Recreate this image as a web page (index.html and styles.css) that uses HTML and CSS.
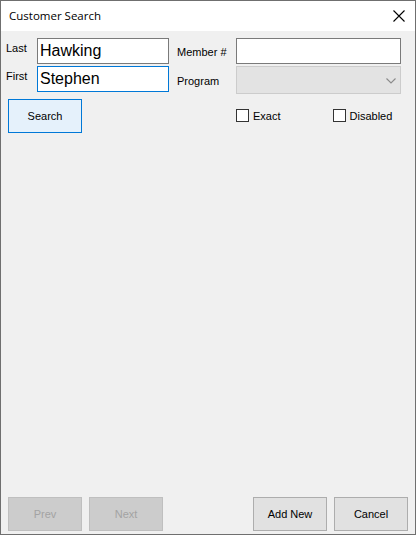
FILE: index.html
```html
<!DOCTYPE html>
<html>
<head>
<meta charset="utf-8">
<link rel="stylesheet" href="styles.css">
</head>
<body>
<div class="window">
  <div class="titlebar">
    <span class="title">Customer Search</span>
    <svg class="close" width="12" height="12" viewBox="0 0 12 12"><path d="M0.5 0.5 L11.5 11.5 M11.5 0.5 L0.5 11.5" stroke="#000" stroke-width="1.1" fill="none"/></svg>
  </div>
  <div class="content">
    <div class="form">
      <span class="lbl lbl-last">Last</span>
      <div class="tb tb-last">Hawking</div>
      <span class="lbl2 lbl-member">Member #</span>
      <div class="tb tb-member"></div>

      <span class="lbl lbl-first">First</span>
      <div class="tb tb-first focus">Stephen</div>
      <span class="lbl2 lbl-program">Program</span>
      <div class="combo">
        <svg class="chev" width="10" height="6" viewBox="0 0 10 6"><path d="M0.5 0.5 L5 5 L9.5 0.5" stroke="#8a8a8a" stroke-width="1.1" fill="none"/></svg>
      </div>

      <button class="btn btn-search">Search</button>
      <div class="checks">
        <label class="chk"><span class="box"></span><span>Exact</span></label>
        <label class="chk chk-disabled"><span class="box"></span><span>Disabled</span></label>
      </div>
    </div>
    <div class="spacer"></div>
    <div class="bottom">
      <div class="group">
        <button class="btn btn-off">Prev</button>
        <button class="btn btn-off">Next</button>
      </div>
      <div class="group">
        <button class="btn btn-norm">Add New</button>
        <button class="btn btn-norm">Cancel</button>
      </div>
    </div>
  </div>
</div>
</body>
</html>
```

FILE: styles.css
```css
html, body {
  margin: 0;
  padding: 0;
  background: #f0f0f0;
}
body {
  font-family: "Liberation Sans", Arial, sans-serif;
  font-size: 11px;
  color: #000;
}
.window {
  width: 416px;
  height: 535px;
  box-sizing: border-box;
  border: 1px solid #6f6f6f;
  display: flex;
  flex-direction: column;
  background: #f0f0f0;
}
.titlebar {
  height: 30px;
  background: #fff;
  display: flex;
  align-items: center;
  justify-content: space-between;
  padding: 0 10px 2px 8px;
  box-sizing: border-box;
}
.title {
  font-family: "Open Sans", "Liberation Sans", sans-serif;
  font-size: 11.5px;
}
.close {
  display: block;
  margin-top: 1px;
}
.content {
  flex: 1;
  display: flex;
  flex-direction: column;
  padding: 7px 7px 3px 5px;
}
.form {
  display: grid;
  grid-template-columns: 31px 132px 8px 59px 165px;
  grid-template-rows: 26px 28px 34px;
  row-gap: 2px;
}
.form .btn-search {
  grid-column: 1 / 3;
  grid-row: 3;
  margin-top: 3px;
  margin-left: 2px;
}
.lbl {
  grid-column: 1;
  padding-top: 4px;
  line-height: 13px;
}
.lbl2 {
  grid-column: 4;
  align-self: center;
  padding-top: 3px;
  line-height: 13px;
}
.lbl-first { grid-row: 2; }
.lbl-program { grid-row: 2; }
.tb {
  grid-column: 2;
  box-sizing: border-box;
  height: 26px;
  border: 1px solid #7a7a7a;
  background: #fff;
  font-size: 16px;
  line-height: 24px;
  padding-left: 2px;
  white-space: nowrap;
  overflow: hidden;
}
.tb.focus { border-color: #0078d7; }
.tb-first { grid-row: 2; }
.tb-member { grid-column: 5; }
.combo {
  grid-column: 5;
  grid-row: 2;
  box-sizing: border-box;
  height: 28px;
  border: 1px solid #cccccc;
  background: #e3e3e3;
  display: flex;
  align-items: center;
  justify-content: flex-end;
  padding-right: 4px;
}
.chev { display: block; margin-top: 1px; }
.checks {
  grid-column: 5;
  grid-row: 3;
  display: flex;
  align-items: center;
  margin-top: 5px;
}
.chk {
  display: flex;
  align-items: center;
  gap: 4px;
  font-size: 11px;
}
.chk-disabled { margin-left: 52px; }
.box {
  width: 13px;
  height: 13px;
  box-sizing: border-box;
  border: 1px solid #333;
  background: #fff;
}
.btn {
  box-sizing: border-box;
  width: 74px;
  height: 34px;
  font-family: "Liberation Sans", Arial, sans-serif;
  font-size: 11px;
  padding: 0;
  margin: 0;
  color: #000;
}
.btn-search {
  border: 1px solid #0078d7;
  background: #e5f1fb;
}
.spacer { flex: 1; }
.bottom {
  display: flex;
  justify-content: space-between;
  padding-left: 2px;
}
.group {
  display: flex;
  gap: 7px;
}
.btn-off {
  border: 1px solid #bfbfbf;
  background: #cccccc;
  color: #a3a3a3;
}
.btn-norm {
  border: 1px solid #adadad;
  background: #e1e1e1;
}
```
